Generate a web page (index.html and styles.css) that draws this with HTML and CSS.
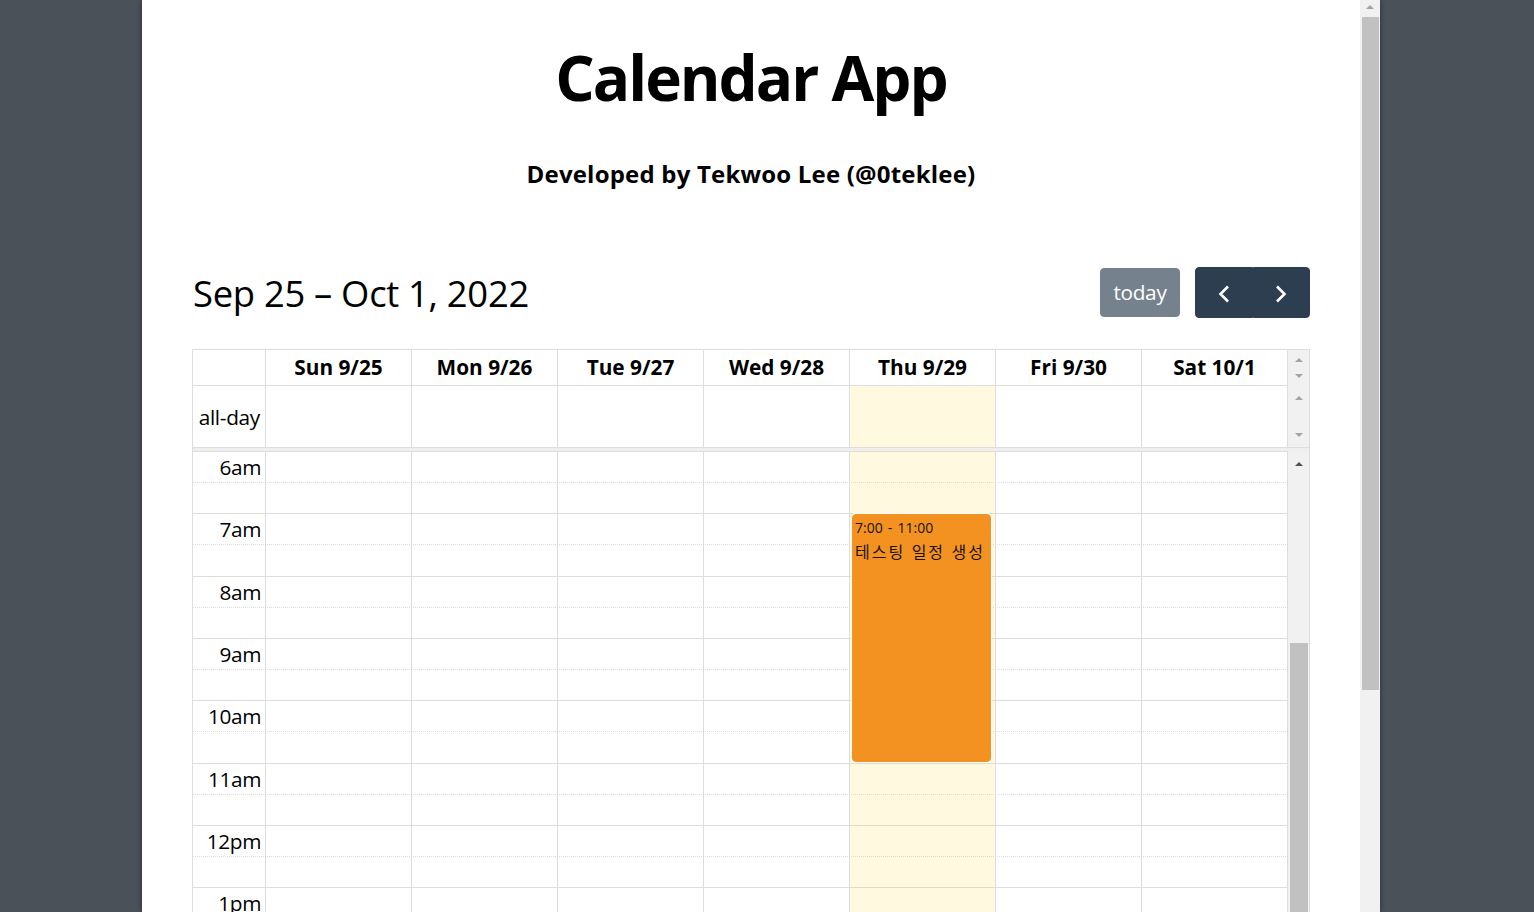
FILE: index.html
```html
<!DOCTYPE html>
<html lang="ko">
<head>
<meta charset="utf-8">
<title>Calendar App</title>
<link rel="stylesheet" href="styles.css">
</head>
<body>
<div class="window">
  <main class="content">
    <header class="hero">
      <h1 class="hero-title">Calendar App</h1>
      <h2 class="hero-sub">Developed by Tekwoo Lee (@0teklee)</h2>
    </header>
    <section class="cal">
      <div class="toolbar">
        <h2 class="toolbar-title">Sep 25 – Oct 1, 2022</h2>
        <div class="toolbar-actions">
          <button class="btn btn-today" disabled>today</button>
          <div class="btn-group">
            <button class="btn btn-nav btn-prev" aria-label="prev">
              <svg width="12" height="18" viewBox="0 0 12 18"><path d="M10 1.5 L2.5 9 L10 16.5" fill="none" stroke="#fff" stroke-width="2.6"/></svg>
            </button>
            <button class="btn btn-nav btn-next" aria-label="next">
              <svg width="12" height="18" viewBox="0 0 12 18"><path d="M2 1.5 L9.5 9 L2 16.5" fill="none" stroke="#fff" stroke-width="2.6"/></svg>
            </button>
          </div>
        </div>
      </div>

      <div class="grid">
        <div class="row-head">
          <div class="cell"></div>
          <div class="cell day-head">Sun 9/25</div>
          <div class="cell day-head">Mon 9/26</div>
          <div class="cell day-head">Tue 9/27</div>
          <div class="cell day-head">Wed 9/28</div>
          <div class="cell day-head">Thu 9/29</div>
          <div class="cell day-head">Fri 9/30</div>
          <div class="cell day-head">Sat 10/1</div>
          <div class="gutter gutter-head"><span class="arr up"></span><span class="arr down"></span></div>
        </div>

        <div class="row-allday">
          <div class="cell axis-allday">all-day</div>
          <div class="cell"></div>
          <div class="cell"></div>
          <div class="cell"></div>
          <div class="cell"></div>
          <div class="cell today"></div>
          <div class="cell"></div>
          <div class="cell"></div>
          <div class="gutter gutter-allday"><span class="arr up"></span><span class="arr down"></span></div>
        </div>

        <div class="divider"></div>

        <div class="body">
          <div class="timegrid">
            <div class="slots">
              <div class="slot"><span class="label">6am</span></div>
              <div class="slot minor"></div>
              <div class="slot"><span class="label">7am</span></div>
              <div class="slot minor"></div>
              <div class="slot"><span class="label">8am</span></div>
              <div class="slot minor"></div>
              <div class="slot"><span class="label">9am</span></div>
              <div class="slot minor"></div>
              <div class="slot"><span class="label">10am</span></div>
              <div class="slot minor"></div>
              <div class="slot"><span class="label">11am</span></div>
              <div class="slot minor"></div>
              <div class="slot"><span class="label">12pm</span></div>
              <div class="slot minor"></div>
              <div class="slot"><span class="label">1pm</span></div>
              <div class="slot minor"></div>
            </div>
            <div class="cols">
              <div class="col"></div>
              <div class="col"></div>
              <div class="col"></div>
              <div class="col"></div>
              <div class="col"></div>
              <div class="col today col-events">
                <div class="event ev-7-11">
                  <div class="event-time">7:00 - 11:00</div>
                  <div class="event-title">테스팅 일정 생성</div>
                </div>
              </div>
              <div class="col"></div>
              <div class="col"></div>
            </div>
          </div>
          <div class="gutter gutter-body"><span class="arr up dark"></span><span class="thumb"></span></div>
        </div>
      </div>
    </section>
  </main>
  <div class="page-scroll"><span class="arr up"></span><span class="page-thumb"></span></div>
</div>
</body>
</html>
```

FILE: styles.css
```css
* { box-sizing: border-box; }

html, body {
  margin: 0;
  height: 100%;
}

body {
  background: #4a5159;
  font-family: "Open Sans", "Noto Sans CJK KR", sans-serif;
  color: #000;
  overflow: hidden;
}

.window {
  margin-left: 142px;
  width: 1238px;
  height: 912px;
  background: #fff;
  display: flex;
  overflow: hidden;
  box-shadow: 0 0 5px rgba(0, 0, 0, 0.45);
}

.content {
  flex: 1;
  min-width: 0;
  padding: 0 50px;
  overflow: hidden;
}

/* hero */
.hero {
  text-align: center;
  padding-top: 39px;
}

.hero-title {
  margin: 0;
  font-size: 62px;
  line-height: 76.8px;
  font-weight: 700;
  letter-spacing: -2px;
}

.hero-sub {
  margin: 40px 0 0;
  font-size: 24px;
  line-height: 36px;
  font-weight: 700;
  letter-spacing: 0.2px;
}

/* calendar */
.cal {
  margin-top: 75px;
  font-size: 20.8px;
}

.toolbar {
  display: flex;
  justify-content: space-between;
  align-items: center;
  height: 51px;
  margin-bottom: 31px;
}

.toolbar-title {
  margin: 0 0 0 1px;
  font-size: 36.4px;
  font-weight: 400;
  line-height: normal;
  letter-spacing: -0.3px;
  padding-top: 2px;
}

.toolbar-actions {
  display: flex;
  align-items: center;
  gap: 15px;
}

.btn {
  font: inherit;
  color: #fff;
  background: #2c3e50;
  border: 1px solid #2c3e50;
  border-radius: 4px;
  cursor: pointer;
}

.btn-today {
  height: 49px;
  padding: 0 12.5px;
  line-height: 1.5;
  letter-spacing: -0.3px;
  opacity: 0.65;
}

.btn-group {
  display: flex;
}

.btn-nav {
  width: 57.5px;
  height: 51px;
  padding: 4px 0 0;
  display: flex;
  align-items: center;
  justify-content: center;
}

.btn-prev { border-radius: 4px 0 0 4px; }
.btn-next { border-radius: 0 4px 4px 0; }

/* grid */
.grid {
  border: 1px solid #ddd;
  border-bottom: 0;
}

.row-head,
.row-allday {
  display: grid;
  grid-template-columns: 73px repeat(7, 146px) 21px;
}

.row-head {
  height: 36px;
}

.row-head .cell {
  border-right: 1px solid #ddd;
  border-bottom: 1px solid #ddd;
}

.day-head {
  font-weight: 700;
  text-align: center;
  line-height: 31.2px;
  padding: 2px 4px;
  white-space: nowrap;
}

.row-allday {
  height: 62px;
  border-bottom: 1px solid #ddd;
}

.row-allday .cell {
  border-right: 1px solid #ddd;
}

.axis-allday {
  display: flex;
  align-items: center;
  justify-content: flex-end;
  padding: 2px 5px 0 0;
  letter-spacing: -0.3px;
}

.today {
  background: rgba(255, 220, 40, 0.15);
}

.divider {
  height: 3px;
  background: #efefef;
}

/* scroll gutters */
.gutter {
  background: #f1f1f1;
  display: flex;
  flex-direction: column;
  align-items: center;
}

.gutter-head {
  padding: 8px 0 8px;
  justify-content: space-between;
}

.gutter-allday {
  padding: 10px 0 10px;
  justify-content: space-between;
}

.arr {
  width: 0;
  height: 0;
  border-left: 4.5px solid transparent;
  border-right: 4.5px solid transparent;
}

.arr.up { border-bottom: 4.5px solid #a3a3a3; }
.arr.down { border-top: 4.5px solid #a3a3a3; }
.arr.up.dark { border-bottom-color: #505050; }

/* body */
.body {
  display: flex;
  height: 499.2px;
}

.timegrid {
  display: grid;
  width: 1095px;
  flex: none;
}

.slots,
.cols {
  grid-area: 1 / 1;
}

.slot {
  height: 31.2px;
  border-top: 1px solid #ddd;
  display: flex;
}

.slot.minor {
  border-top-style: dotted;
}

.label {
  width: 73px;
  text-align: right;
  padding-right: 5px;
  line-height: 31px;
  letter-spacing: -0.4px;
}

.cols {
  display: grid;
  grid-template-columns: 73px repeat(7, 146px);
}

.col {
  border-right: 1px solid #ddd;
}

.col-events {
  display: grid;
  grid-template-rows: repeat(16, 31.2px);
}

.event {
  margin: 1px 4px 1px 2px;
  background: #f39221;
  border: 1px solid #f39221;
  border-radius: 4px;
  box-shadow: 0 0 0 1px #fff;
  padding: 3px 2px 0;
  color: #1a1208;
  overflow: hidden;
}

.ev-7-11 {
  grid-row: 3 / 11;
}

.event-time {
  font-size: 14px;
  line-height: normal;
  word-spacing: 1.5px;
  white-space: nowrap;
}

.event-title {
  margin-top: 3px;
  font-family: "Noto Sans CJK KR", sans-serif;
  font-size: 16px;
  line-height: 22px;
  letter-spacing: 2px;
  white-space: nowrap;
}

.gutter-body {
  width: 21px;
  flex: none;
  padding-top: 11px;
}

.gutter-body .thumb {
  align-self: stretch;
  flex: 1;
  margin: 177px 1px 0 2px;
  background: #c1c1c1;
}

/* page scrollbar */
.page-scroll {
  width: 20px;
  flex: none;
  background: #f1f1f1;
  display: flex;
  flex-direction: column;
  align-items: center;
  padding-top: 5px;
}

.page-thumb {
  align-self: stretch;
  height: 673px;
  margin: 7.5px 1px 0 2px;
  background: #c1c1c1;
}
```
